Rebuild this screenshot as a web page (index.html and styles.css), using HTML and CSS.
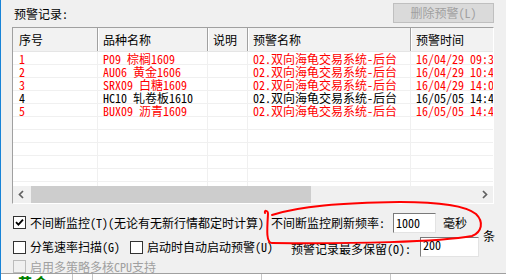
FILE: index.html
```html
<!DOCTYPE html>
<html>
    <head>
        <meta charset="utf-8">
        <title>预警记录</title>

        <link rel="stylesheet" href="styles.css">

    </head>
    <body>

        <div class="dlg">
            <div class="topbar">
                <span class="caption">预警记录:</span>
                <button class="btn" disabled>删除预警(L)</button>
            </div>

            <div class="list">
                <div class="list-head">
                    <div class="c1">序号</div>
                    <div class="c2">品种名称</div>
                    <div class="c3">说明</div>
                    <div class="c4">预警名称</div>
                    <div class="c5">预警时间</div>
                </div>
                <div class="list-body">
                    <div class="row red">
                        <div class="c1">1</div><div class="c2">P09 棕榈1609</div><div class="c3"></div>
                        <div class="c4">02.双向海龟交易系统-后台</div><div class="c5">16/04/29 09:3</div>
                    </div>
                    <div class="row red">
                        <div class="c1">2</div><div class="c2">AU06 黄金1606</div><div class="c3"></div>
                        <div class="c4">02.双向海龟交易系统-后台</div><div class="c5">16/04/29 10:4</div>
                    </div>
                    <div class="row red">
                        <div class="c1">3</div><div class="c2">SRX09 白糖1609</div><div class="c3"></div>
                        <div class="c4">02.双向海龟交易系统-后台</div><div class="c5">16/04/29 14:0</div>
                    </div>
                    <div class="row">
                        <div class="c1">4</div><div class="c2">HC10 轧卷板1610</div><div class="c3"></div>
                        <div class="c4">02.双向海龟交易系统-后台</div><div class="c5">16/05/05 14:4</div>
                    </div>
                    <div class="row red">
                        <div class="c1">5</div><div class="c2">BUX09 沥青1609</div><div class="c3"></div>
                        <div class="c4">02.双向海龟交易系统-后台</div><div class="c5">16/05/05 14:4</div>
                    </div>
                    <div class="row"><div class="c1"></div><div class="c2"></div><div class="c3"></div><div class="c4"></div><div class="c5"></div></div>
                    <div class="row"><div class="c1"></div><div class="c2"></div><div class="c3"></div><div class="c4"></div><div class="c5"></div></div>
                    <div class="row"><div class="c1"></div><div class="c2"></div><div class="c3"></div><div class="c4"></div><div class="c5"></div></div>
                    <div class="row"><div class="c1"></div><div class="c2"></div><div class="c3"></div><div class="c4"></div><div class="c5"></div></div>
                    <div class="row"><div class="c1"></div><div class="c2"></div><div class="c3"></div><div class="c4"></div><div class="c5"></div></div>
                    <div class="row"><div class="c1"></div><div class="c2"></div><div class="c3"></div><div class="c4"></div><div class="c5"></div></div>
                </div>
                <div class="hscroll">
                    <div class="arrow">
                        <svg width="17" height="17" viewBox="0 0 17 17"><polyline points="10,5 6.5,8.5 10,12" fill="none" stroke="#606060" stroke-width="1.7"/></svg>
                    </div>
                    <div class="track"><div class="thumb"></div></div>
                    <div class="arrow">
                        <svg width="17" height="17" viewBox="0 0 17 17"><polyline points="7,5 10.5,8.5 7,12" fill="none" stroke="#606060" stroke-width="1.7"/></svg>
                    </div>
                </div>
            </div>

            <div class="opts">
                <div class="opt-row row-a">
                    <label class="chk-item w-a">
                        <span class="box"><svg width="11" height="11" viewBox="0 0 11 11"><polyline points="2,5.2 4.4,7.6 9,2.6" fill="none" stroke="#000" stroke-width="1.8"/></svg></span>
                        不间断监控(T)(无论有无新行情都定时计算)
                    </label>
                    <span class="freq-label">不间断监控刷新频率:</span>
                    <span class="edit w-freq">1000</span>
                    <span class="unit">毫秒</span>
                </div>
                <div class="opt-row row-b">
                    <label class="chk-item w-b1"><span class="box"></span>分笔速率扫描(G)</label>
                    <label class="chk-item w-b2"><span class="box"></span>启动时自动启动预警(U)</label>
                    <span class="keep-label">预警记录最多保留(O):</span>
                    <span class="edit w-keep">200</span>
                    <span class="tiao">条</span>
                </div>
                <div class="opt-row row-c">
                    <label class="chk-item disabled"><span class="box"></span>启用多策略多核CPU支持</label>
                </div>
            </div>
        </div>

        <div class="under">
            <div class="u1">黄金</div>
            <div class="u2"></div>
            <div class="u3"></div>
            <div class="u4"></div>
        </div>

        <!-- hand drawn red mark around the refresh setting -->
        <svg class="mark" width="506" height="280" viewBox="0 0 506 280">
            <path d="M 272 215 C 300 206, 340 203, 400 202 C 440 202, 466 206, 476 214 C 484 222, 482 232, 472 236 C 440 242, 350 244, 272 243 C 266 243, 267 230, 268 214 C 268 210, 264 210, 265 213"
                  fill="none" stroke="#ff0000" stroke-width="2" stroke-linecap="round"/>
        </svg>

    </body>
</html>
```

FILE: styles.css
```css
html, body {
    margin: 0;
    padding: 0;
}

body {
    position: relative;
    width: 506px;
    height: 280px;
    overflow: hidden;
    box-sizing: border-box;
    border-left: 1px solid #1883d7;
    background: #f0f0f0;
    color: #000;
    font-family: "Noto Sans Mono CJK SC", "Noto Sans CJK SC", sans-serif;
    font-size: 12px;
    line-height: 14px;
}

.dlg {
    height: 274px;
    box-sizing: border-box;
    padding: 3px 12px 0 11px;
    border-bottom: 1px solid #a0a0a0;
    overflow: hidden;
}

/* top line: caption + disabled button */
.topbar {
    display: flex;
    justify-content: space-between;
    align-items: flex-start;
    height: 20px;
    margin-bottom: 4px;
}

.caption {
    margin-top: 4px;
    padding-left: 2px;
}

.btn {
    width: 101px;
    height: 20px;
    padding: 0;
    border: 1px solid #bfbfbf;
    background: #dadada;
    color: #a0a0a0;
    font: inherit;
}

/* list view */
.list {
    height: 177px;
    box-sizing: border-box;
    border: 1px solid;
    border-color: #a0a0a0 #ffffff #ffffff #a0a0a0;
    background: #fff;
    overflow: hidden;
}

.list-head,
.row {
    display: flex;
    white-space: nowrap;
}

.list-head {
    height: 24px;
    line-height: 23px;
    box-sizing: border-box;
    border-bottom: 1px solid #e5e5e5;
    background: #f2f2f2;
    overflow: hidden;
}

.list-head > div {
    border-right: 1px solid #a0a0a0;
    box-shadow: 1px 0 0 #fff;
}

.list-body {
    height: 134px;
    overflow: hidden;
}

/* grid line drawn as a background so the text keeps the full 13px */
.row {
    height: 13px;
    line-height: 13px;
    background: linear-gradient(#f0f0f0, #f0f0f0) left bottom / 100% 1px no-repeat;
}

.row > div {
    height: 13px;
    border-right: 1px solid #f0f0f0;
}

.row.red {
    color: #ff0000;
}

.c1, .c2, .c3, .c4, .c5 {
    flex: none;
    box-sizing: border-box;
    padding-left: 5px;
}

.c1 { width: 85px; padding-left: 6px; }
.c2 { width: 110px; }
.c3 { width: 40px; }
.c4 { width: 163px; }
.c5 { width: 90px; }

/* horizontal scrollbar */
.hscroll {
    display: flex;
    height: 17px;
    background: #f0f0f0;
}

.arrow {
    width: 17px;
    height: 17px;
    flex: none;
}

.arrow svg {
    display: block;
}

.track {
    flex: 1;
    padding-left: 1px;
}

.thumb {
    width: 280px;
    height: 17px;
    background: #cdcdcd;
}

/* options under the list */
.opts {
    margin-top: 8px;
    padding-left: 1px;
}

.opt-row {
    display: flex;
    align-items: center;
    white-space: nowrap;
}

.row-a {
    height: 21px;
}

.row-b {
    height: 20px;
    margin-top: 4px;
}

.row-c {
    height: 13px;
    margin-top: 3px;
}

.chk-item {
    display: flex;
    align-items: center;
    flex: none;
}

.box {
    width: 13px;
    height: 13px;
    box-sizing: border-box;
    border: 1px solid #333;
    background: #fff;
    margin-right: 4px;
    flex: none;
}

.box svg {
    display: block;
}

.chk-item.disabled {
    color: #a0a0a0;
}

.chk-item.disabled .box {
    border-color: #bcbcbc;
    background: #f0f0f0;
}

.w-a { width: 258px; }
.w-b1 { width: 117px; }
.w-b2 { width: 161px; }

.freq-label {
    width: 122px;
    flex: none;
}

.edit {
    flex: none;
    height: 20px;
    box-sizing: border-box;
    padding: 2px 0 0 2px;
    border: 1px solid;
    border-color: #7a7a7a #e3e3e3 #e3e3e3 #7a7a7a;
    background: #fff;
    line-height: 14px;
}

.w-freq {
    width: 43px;
}

.w-keep {
    width: 59px;
    padding-top: 0;
}

.unit {
    margin-left: 7px;
}

.keep-label {
    width: 129px;
    flex: none;
    align-self: flex-end;
    margin-bottom: 1px;
}

.tiao {
    align-self: flex-start;
    margin-top: -8px;
    margin-left: 4px;
}

/* strip of the window lying below */
.under {
    display: flex;
    height: 6px;
    background: #fff;
    overflow: hidden;
}

.under > div {
    flex: none;
    height: 6px;
    border-right: 1px solid #c8c8c8;
}

.u1 {
    width: 72px;
    padding-left: 16px;
    box-sizing: border-box;
    color: #008000;
    font-size: 16px;
    font-weight: bold;
    line-height: 18px;
    overflow: hidden;
}

.u2 { width: 19px; }
.u3 { width: 168px; }
.u4 { width: 128px; }

.mark {
    position: absolute;
    left: -1px;
    top: 0;
    pointer-events: none;
}
```
